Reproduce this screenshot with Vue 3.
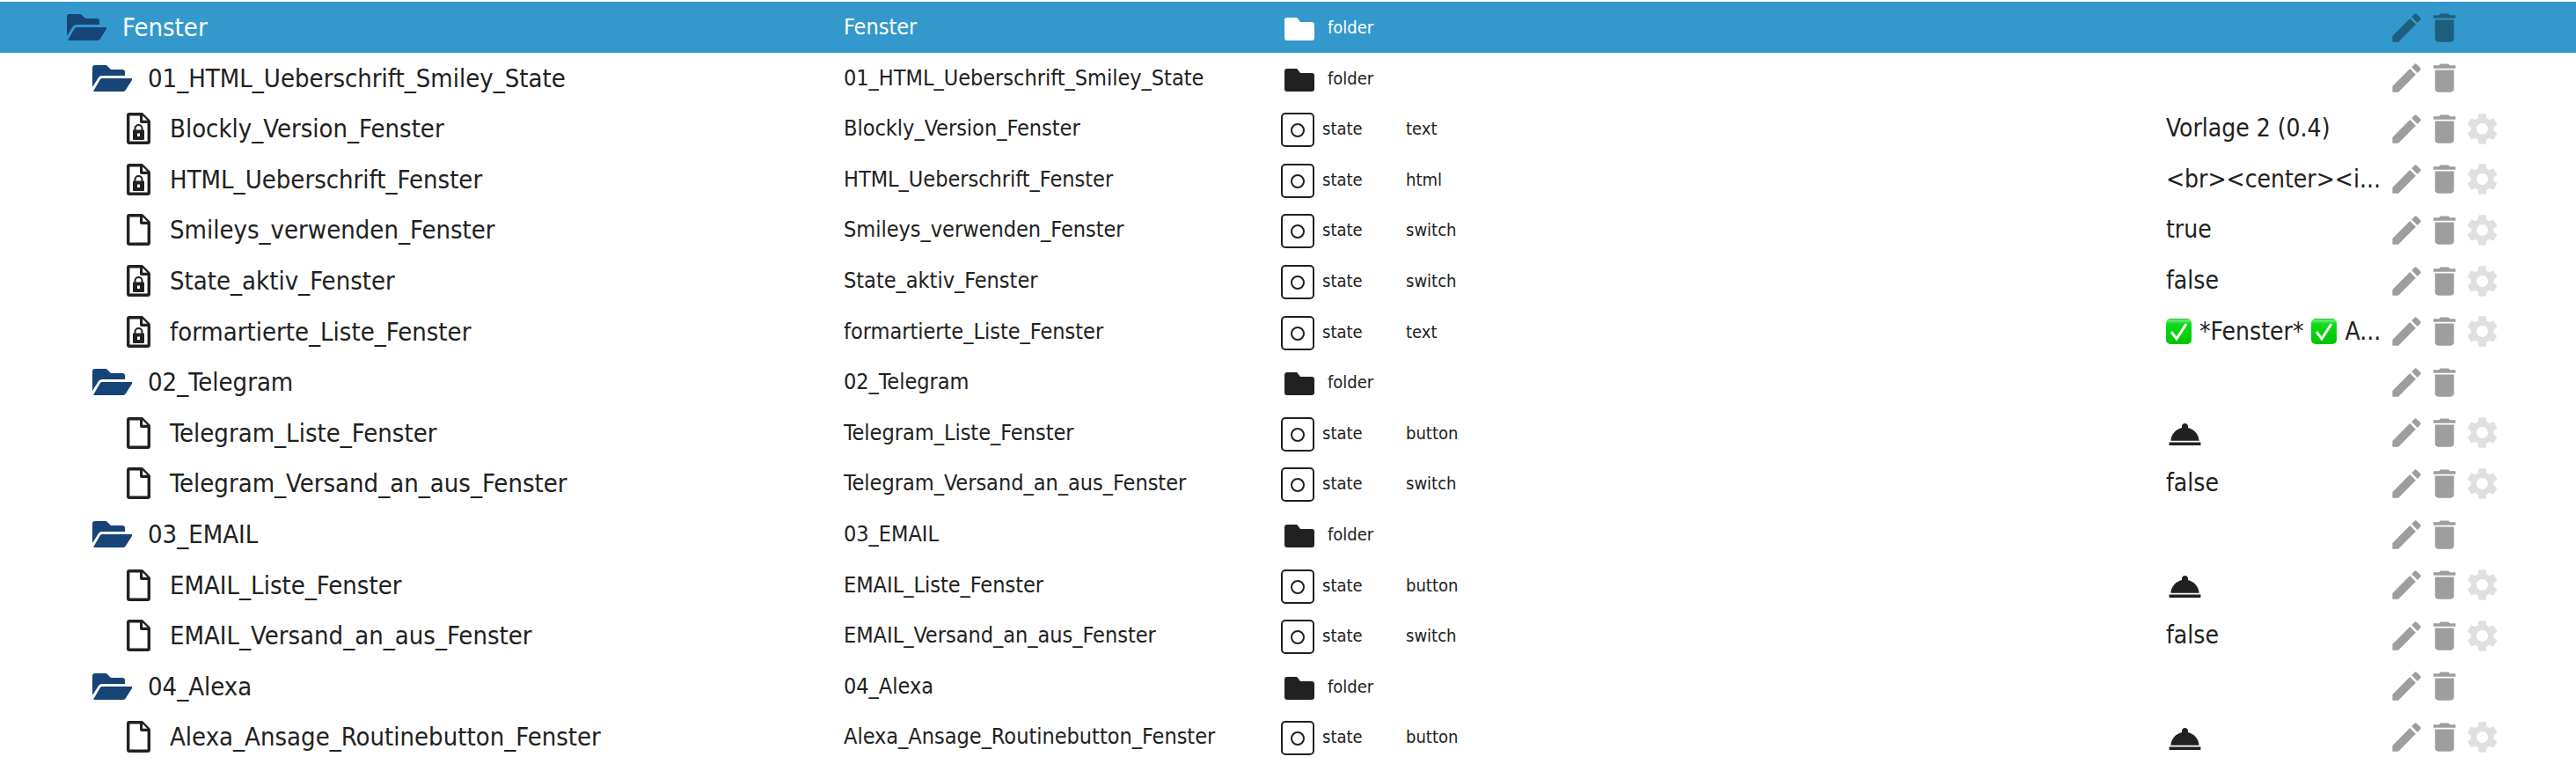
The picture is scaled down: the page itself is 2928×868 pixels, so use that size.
<template>
  <table class="object-table">
    <colgroup>
      <col class="col-name" />
      <col class="col-id" />
      <col class="col-type" />
      <col class="col-role" />
      <col class="col-value" />
      <col class="col-actions" />
    </colgroup>
    <tbody>
      <tr
        v-for="item in items"
        :key="item.id"
        :class="['object-row', { selected: item.level === 0 }]"
      >
        <td>
          <div :class="['name', `level-${item.level}`]">
            <svg v-if="item.type === 'folder'" class="tree-icon folder-open" viewBox="0 0 45 30">
              <path d="M0 25V3a3 3 0 0 1 3-3h12a3 3 0 0 1 2 1l4 4h13a3 3 0 0 1 3 3v4H11a5 5 0 0 0-4 2z" />
              <path d="M2 28l7-12a3 3 0 0 1 2-1h33a1 1 0 0 1 1 2l-7 11a4 4 0 0 1-3 2H3a1 1 0 0 1-1-2z" />
            </svg>
            <svg v-else class="tree-icon file" viewBox="0 0 27 36">
              <path
                fill-rule="evenodd"
                d="M3 0h14a3 3 0 0 1 2 1l7 7a3 3 0 0 1 1 2v23a3 3 0 0 1-3 3H3a3 3 0 0 1-3-3V3a3 3 0 0 1 3-3zM3.400 3.400v29.200h20.200V12H17a2 2 0 0 1-2-2V3.400zM18.200 3.600v5.200h5.200z"
              />
              <template v-if="item.locked">
                <path class="shackle" d="M9.500 20v-2a4 4 0 0 1 8 0v2" />
                <path
                  fill-rule="evenodd"
                  d="M8 19.500h11a1 1 0 0 1 1 1V30a1 1 0 0 1-1 1H8a1 1 0 0 1-1-1v-9.500a1 1 0 0 1 1-1zM12 23.500v3.500h3v-3.500z"
                />
              </template>
            </svg>
            <span>{{ item.id }}</span>
          </div>
        </td>
        <td class="id">{{ item.id }}</td>
        <td>
          <div v-if="item.type === 'folder'" class="type type-folder">
            <svg viewBox="0 0 34 26">
              <path d="M3 0h10a2 2 0 0 1 2 1l3 4h13a3 3 0 0 1 3 3v15a3 3 0 0 1-3 3H3a3 3 0 0 1-3-3V3a3 3 0 0 1 3-3z" />
            </svg>
            <span>folder</span>
          </div>
          <div v-else class="type type-state">
            <svg viewBox="0 0 38 40">
              <rect x="1" y="1" width="36" height="37" rx="4" />
              <circle cx="19" cy="20" r="7" />
            </svg>
            <span>state</span>
          </div>
        </td>
        <td class="role">{{ item.role }}</td>
        <td>
          <button v-if="item.role === 'button'" class="trigger" aria-label="Trigger">
            <svg viewBox="0 0 24 24"><path :d="icons.bell" /></svg>
          </button>
          <div v-else class="value">
            <template v-for="(part, i) in item.value" :key="i">
              <svg v-if="part === CHECK" class="check" viewBox="0 0 29 29">
                <defs>
                  <linearGradient id="check-fill" x1="0" y1="0" x2="0" y2="1">
                    <stop offset="0" stop-color="#0fae22" />
                    <stop offset="0.060" stop-color="#6df07c" />
                    <stop offset="0.200" stop-color="#0fdc1c" />
                    <stop offset="1" stop-color="#00c400" />
                  </linearGradient>
                </defs>
                <rect width="29" height="29" rx="5" fill="url(#check-fill)" />
                <path d="M6 15l6 8L23 6" />
              </svg>
              <span v-else>{{ part }}</span>
            </template>
          </div>
        </td>
        <td>
          <div class="actions">
            <button aria-label="Edit">
              <svg viewBox="0 0 24 24"><path :d="icons.edit" /></svg>
            </button>
            <button aria-label="Delete">
              <svg viewBox="0 0 24 24"><path :d="icons.trash" /></svg>
            </button>
            <button v-if="item.type === 'state'" class="settings" aria-label="Settings">
              <svg viewBox="0 0 24 24"><path :d="icons.gear" /></svg>
            </button>
          </div>
        </td>
      </tr>
    </tbody>
  </table>
</template>

<script setup>
const CHECK = '✅'

const folder = (id, level = 1) => ({ id, level, type: 'folder', role: '', value: [] })
const state = (id, role, value = [], locked = false) => ({
  id,
  level: 2,
  type: 'state',
  role,
  value,
  locked
})

const items = [
  folder('Fenster', 0),
  folder('01_HTML_Ueberschrift_Smiley_State'),
  state('Blockly_Version_Fenster', 'text', ['Vorlage 2 (0.4)'], true),
  state('HTML_Ueberschrift_Fenster', 'html', ['<br><center><i...'], true),
  state('Smileys_verwenden_Fenster', 'switch', ['true']),
  state('State_aktiv_Fenster', 'switch', ['false'], true),
  state('formartierte_Liste_Fenster', 'text', [CHECK, '*Fenster*', CHECK, 'A...'], true),
  folder('02_Telegram'),
  state('Telegram_Liste_Fenster', 'button'),
  state('Telegram_Versand_an_aus_Fenster', 'switch', ['false']),
  folder('03_EMAIL'),
  state('EMAIL_Liste_Fenster', 'button'),
  state('EMAIL_Versand_an_aus_Fenster', 'switch', ['false']),
  folder('04_Alexa'),
  state('Alexa_Ansage_Routinebutton_Fenster', 'button')
]

const icons = {
  edit: 'M3 17.250V21h3.750L17.810 9.940l-3.750-3.750L3 17.250zM20.710 7.040c.39-.39.39-1.020 0-1.410l-2.340-2.340c-.39-.39-1.020-.39-1.410 0l-1.830 1.830 3.750 3.750 1.830-1.830z',
  trash: 'M6 19c0 1.100.9 2 2 2h8c1.100 0 2-.9 2-2V7H6v12zM19 4h-3.500l-1-1h-5l-1 1H5v2h14V4z',
  gear: 'M19.140 12.940c.04-.3.06-.61.06-.94 0-.32-.02-.64-.07-.94l2.030-1.580c.18-.14.23-.41.12-.61l-1.920-3.320c-.12-.22-.37-.29-.59-.22l-2.390.96c-.5-.38-1.030-.7-1.620-.94l-.36-2.540c-.04-.24-.24-.41-.48-.41h-3.840c-.24 0-.43.17-.47.41l-.36 2.540c-.59.24-1.130.57-1.620.94l-2.390-.96c-.22-.08-.47 0-.59.22L2.740 8.870c-.12.21-.08.47.12.61l2.030 1.580c-.05.3-.09.63-.09.94s.02.64.07.94l-2.030 1.580c-.18.14-.23.41-.12.61l1.920 3.320c.12.22.37.29.59.22l2.390-.96c.5.38 1.030.7 1.620.94l.36 2.540c.05.24.24.41.48.41h3.840c.24 0 .44-.17.47-.41l.36-2.540c.59-.24 1.130-.56 1.620-.94l2.390.96c.22.08.47 0 .59-.22l1.920-3.320c.12-.22.07-.47-.12-.61l-2.010-1.580zM12 15.600c-1.980 0-3.600-1.620-3.600-3.600s1.620-3.600 3.600-3.600 3.600 1.620 3.600 3.600-1.620 3.600-3.600 3.600z',
  bell: 'M2 17h20v2H2zm11.840-9.210c.1-.24.16-.51.16-.79 0-1.100-.9-2-2-2s-2 .9-2 2c0 .28.06.55.16.79C6.250 8.600 3.270 11.930 3 16h18c-.27-4.070-3.250-7.400-7.160-8.210z'
}
</script>

<style>
body {
  margin: 0;
  background: #fff;
}
</style>

<style scoped>
.object-table {
  width: 100%;
  margin-top: 2px;
  table-layout: fixed;
  border-collapse: collapse;
  font-family: "DejaVu Sans Condensed", "Noto Sans", sans-serif;
  font-size: 29px;
  color: #212121;
}

.col-name {
  width: 959px;
}

.col-id {
  width: 497px;
}

.col-type {
  width: 142px;
}

.col-value {
  width: 252px;
}

.col-actions {
  width: 214px;
}

.object-row {
  height: 58px;
}

.object-row:nth-child(5n + 2),
.object-row:nth-child(5n + 4) {
  height: 57px;
}

.object-row.selected {
  background: #3399cc;
  color: #fff;
}

td {
  padding: 0;
  line-height: 36px;
  vertical-align: middle;
  white-space: nowrap;
}

svg {
  display: block;
  flex: none;
  fill: currentColor;
}

.name {
  display: flex;
  align-items: center;
  gap: 18px;
}

.level-0 {
  padding-left: 76px;
}

.level-1 {
  padding-left: 105px;
}

.level-2 {
  gap: 22px;
  padding-left: 144px;
}

.folder-open {
  width: 45px;
  height: 30px;
  color: #164477;
}

.file {
  width: 27px;
  height: 36px;
}

.shackle {
  fill: none;
  stroke: currentColor;
  stroke-width: 2;
}

.id {
  font-size: 25px;
}

.role,
.type {
  font-size: 20px;
}

.type {
  display: flex;
  align-items: center;
}

.type-folder {
  gap: 15px;
  padding-left: 4px;
}

.type-folder svg {
  width: 34px;
  height: 26px;
  margin-top: 4px;
}

.type-state {
  gap: 9px;
}

.type-state svg {
  width: 38px;
  height: 40px;
  margin-top: 4px;
  fill: none;
  stroke: currentColor;
  stroke-width: 2;
}

.value {
  display: flex;
  align-items: center;
  gap: 9px;
  font-size: 28px;
}

.check {
  width: 29px;
  height: 29px;
}

.check path {
  fill: none;
  stroke: #fff;
  stroke-width: 3;
}

button {
  display: block;
  padding: 0;
  border: 0;
  background: none;
  color: inherit;
  cursor: pointer;
}

.trigger {
  margin-top: 4px;
}

button svg {
  width: 43px;
  height: 43px;
}

.actions {
  display: flex;
  color: rgba(0, 0, 0, 0.38);
}

.settings {
  color: rgba(0, 0, 0, 0.12);
}
</style>
